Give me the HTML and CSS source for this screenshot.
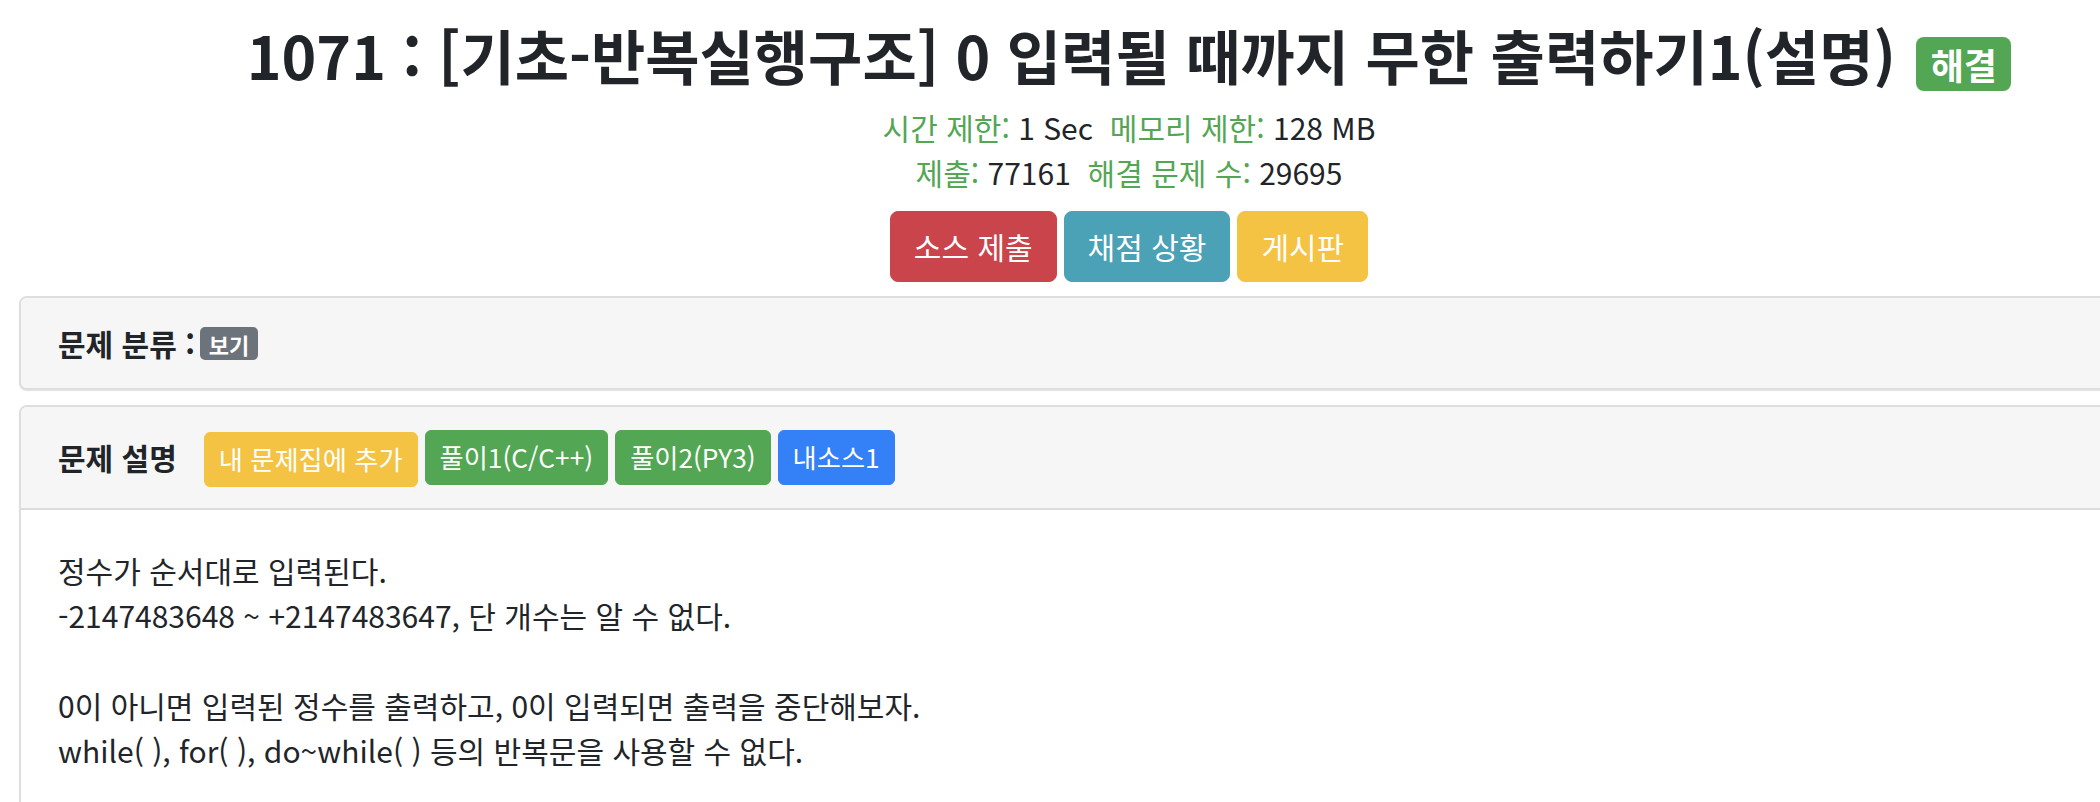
FILE: index.html
```html
<!DOCTYPE html>
<html lang="ko">
<head>
<meta charset="utf-8">
<title>1071 : [기초-반복실행구조] 0 입력될 때까지 무한 출력하기1(설명)</title>
<link rel="stylesheet" href="styles.css">
</head>
<body>
<div class="container">
  <header class="problem-head">
    <h1 class="problem-title">1071 : [기초-반복실행구조] 0 입력될 때까지 무한 출력하기1(설명) <span class="badge badge-success">해결</span></h1>
    <div class="meta">
      <div><span class="label">시간 제한:</span> 1 Sec&nbsp; <span class="label">메모리 제한:</span> 128 MB</div>
      <div><span class="label">제출:</span> 77161&nbsp; <span class="label">해결 문제 수:</span> 29695</div>
    </div>
    <div class="actions">
      <a class="btn btn-danger">소스 제출</a>
      <a class="btn btn-info">채점 상황</a>
      <a class="btn btn-warning">게시판</a>
    </div>
  </header>

  <section class="card">
    <div class="card-header">
      <span class="card-title">문제 분류 :</span><span class="badge badge-secondary">보기</span>
    </div>
  </section>

  <section class="card">
    <div class="card-header header-row">
      <span class="card-title">문제 설명</span>
      <a class="btn btn-sm btn-warning btn-add">내 문제집에 추가</a>
      <a class="btn btn-sm btn-success">풀이1(C/C++)</a>
      <a class="btn btn-sm btn-success">풀이2(PY3)</a>
      <a class="btn btn-sm btn-primary">내소스1</a>
    </div>
    <div class="card-body">
      <p>정수가 순서대로 입력된다.<br>
      -2147483648 ~ +2147483647, 단 개수는 알 수 없다.<br>
      <br>
      0이 아니면 입력된 정수를 출력하고, 0이 입력되면 출력을 중단해보자.<br>
      while( ), for( ), do~while( ) 등의 반복문을 사용할 수 없다.</p>
    </div>
  </section>
</div>
</body>
</html>
```

FILE: styles.css
```css
html, body {
  margin: 0;
  padding: 0;
  background: #ffffff;
  overflow: hidden;
}

body {
  font-family: "Noto Sans CJK KR", "Noto Sans", sans-serif;
  font-size: 30px;
  line-height: 1.5;
  color: #212529;
}

.container {
  margin-left: 19px;
  width: 2220px;
}

.problem-head {
  text-align: center;
  padding-top: 20px;
}

.problem-title {
  margin: 0 0 14px;
  font-size: 59px;
  font-weight: 700;
  line-height: 1.2;
}

.badge {
  display: inline-block;
  font-weight: 700;
  line-height: 1;
  color: #fff;
  padding: 0.25em 0.4em;
  border-radius: 0.22em;
  white-space: nowrap;
  vertical-align: baseline;
}

.problem-title .badge {
  font-size: 36px;
  margin-left: 4px;
}

.badge-success { background: #53a653; }
.badge-secondary { background: #6c737b; }

.meta {
  line-height: 45px;
}

.label {
  color: #53a653;
}

.actions {
  display: flex;
  justify-content: center;
  gap: 7px;
  margin-top: 16px;
  margin-bottom: 14px;
}

.btn {
  display: inline-block;
  color: #fff;
  font-size: 30px;
  line-height: 1.5;
  padding: 12px 23px;
  border: 1px solid transparent;
  border-radius: 8px;
  white-space: nowrap;
}

.btn-sm {
  font-size: 26.25px;
  padding: 7px 14px;
  border-radius: 6px;
}

.btn-danger { background: #ca444b; border-color: #ca444b; }
.btn-info { background: #4ba1b6; border-color: #4ba1b6; }
.btn-warning { background: #f5c344; border-color: #f5c344; }
.btn-success { background: #53a653; border-color: #53a653; }
.btn-primary { background: #3380f7; border-color: #3380f7; }

.card {
  border: 2px solid #dedede;
  border-radius: 8px;
  background: #fff;
  box-shadow: 0 1px 1px rgba(0, 0, 0, 0.12);
  margin-bottom: 15px;
  overflow: hidden;
}

.card-header {
  background: #f6f6f6;
  padding: 22.5px 37px;
  line-height: 45px;
}

.card + .card .card-header {
  border-bottom: 2px solid #dcdcdc;
}

.card-title {
  font-weight: 700;
  margin-right: 5px;
}

.card-header .badge-secondary {
  font-size: 22px;
  border-radius: 5px;
  vertical-align: 2px;
}

.header-row {
  display: flex;
  align-items: center;
  gap: 7px;
  padding-top: 21px;
  padding-bottom: 21px;
}

.header-row .card-title {
  margin-right: 20px;
}

.btn-add {
  margin-top: 4px;
}

.card-body {
  padding: 37.5px 37px;
}

.card-body p {
  margin: 0;
  line-height: 45px;
}
```
